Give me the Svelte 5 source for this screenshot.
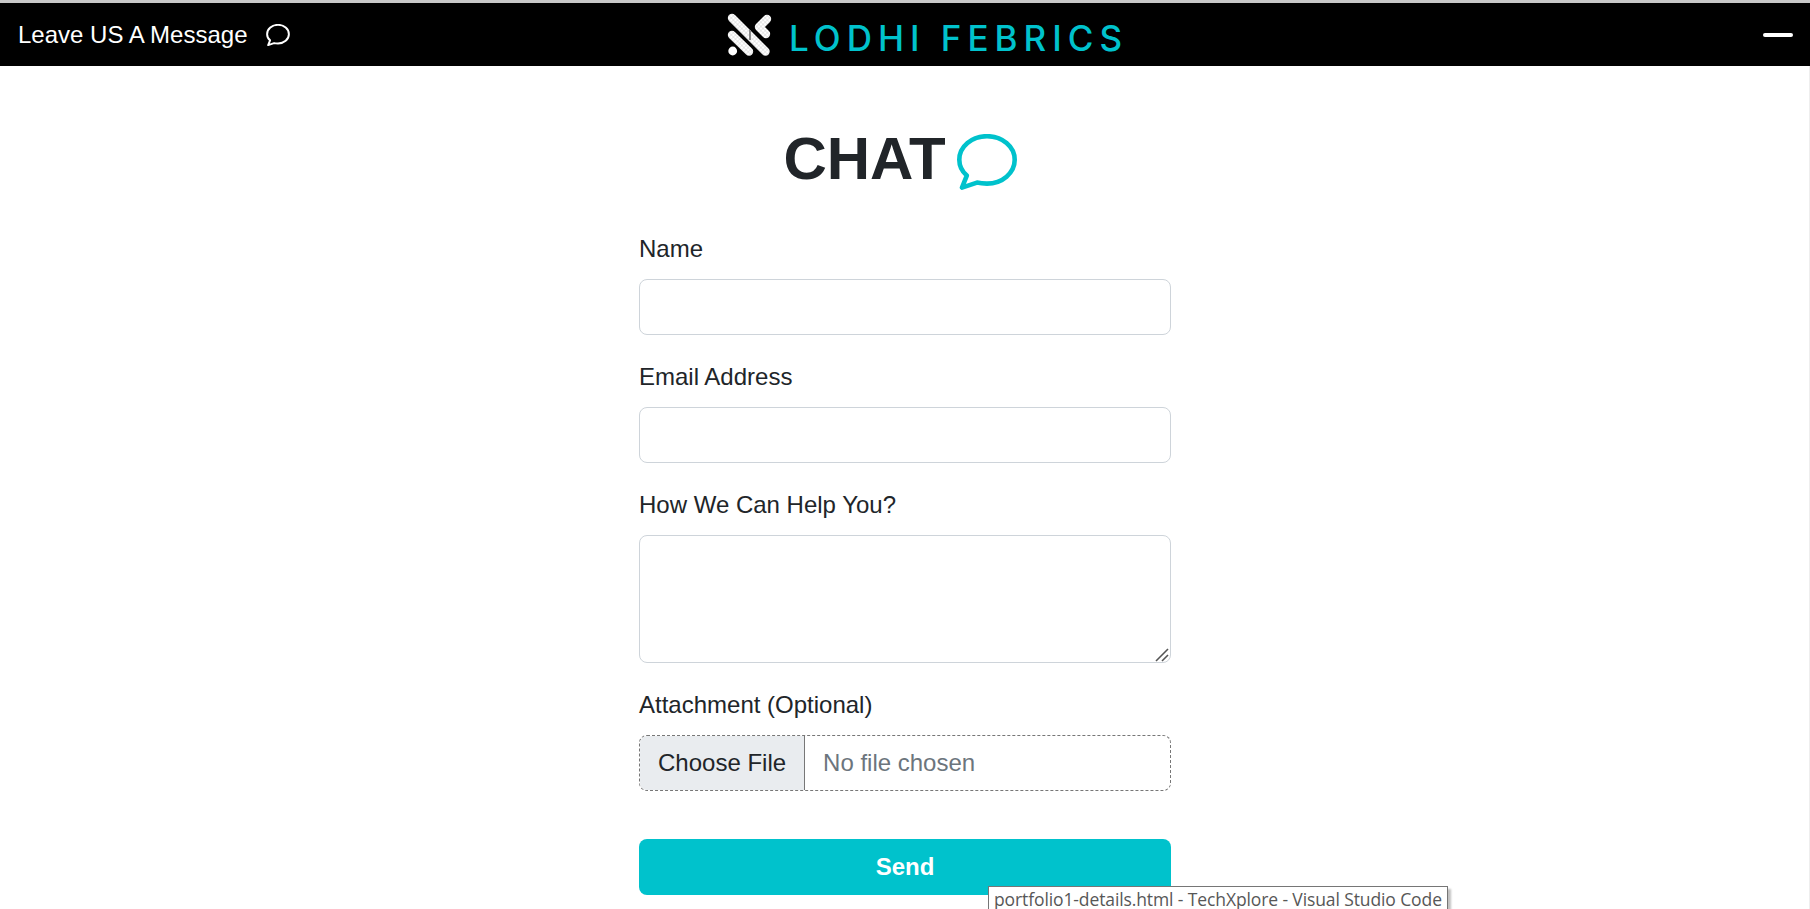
<script>
  let name = ''
  let email = ''
  let message = ''

  // speech bubble used in the top bar and next to the heading
  const bubble = 'M20 48.6C23 49.3 26.4 49.6 30 49.6C45.2 49.6 57.7 39 57.7 25.8C57.7 12.6 45.2 2.2 30 2.2C14.8 2.2 2.3 12.6 2.3 25.8C2.3 32 5.2 37.6 9.8 41.6L5 53.6Z'
</script>

<div class="page">
  <header class="topbar">
    <div class="leave">
      <span>Leave US A Message</span>
      <svg width="24" height="22" viewBox="0 0 60 56" fill="none" stroke="#fff" stroke-width="5" stroke-linejoin="round">
        <path d={bubble} />
      </svg>
    </div>
    <div class="brand">
      <svg width="46" height="44" viewBox="0 0 46 44" fill="none" stroke="url(#weave)" stroke-width="8.4" stroke-linecap="round" stroke-linejoin="round">
        <defs>
          <pattern id="weave" width="3" height="3" patternUnits="userSpaceOnUse" patternTransform="rotate(45)">
            <rect width="3" height="3" fill="#fff" />
            <rect width="3" height="0.4" fill="#ccc" />
            <rect width="0.4" height="3" fill="#ccc" />
          </pattern>
        </defs>
        <path d="M5 5L38.5 38.5" />
        <path d="M5 22L22 38.5" />
        <path d="M40 6L32 14L39 21" />
        <circle cx="5.7" cy="38" r="4.4" fill="#fff" stroke="none" />
        <rect x="22" y="17" width="2" height="10" fill="#888" stroke="none" />
      </svg>
      <span class="brand-name">LODHI FEBRICS</span>
    </div>
    <div class="menu-line"></div>
  </header>

  <main class="content">
    <h1>
      <span>CHAT</span>
      <svg width="60" height="56" viewBox="0 0 60 56" fill="none" stroke="#00c2cc" stroke-width="4.6" stroke-linejoin="round">
        <path d={bubble} />
      </svg>
    </h1>

    <form class="chat-form">
      <label for="name">Name</label>
      <input id="name" class="field" type="text" bind:value={name} />

      <label for="email">Email Address</label>
      <input id="email" class="field" type="email" bind:value={email} />

      <label for="help">How We Can Help You?</label>
      <div class="area-wrap">
        <textarea id="help" class="field area" bind:value={message}></textarea>
        <svg class="grip" width="14" height="14" viewBox="0 0 14 14" stroke="#555" stroke-width="1.6">
          <path d="M1 13L13 1" />
          <path d="M7 13L13 7" />
        </svg>
      </div>

      <label for="file">Attachment (Optional)</label>
      <input id="file" class="field file" type="file" />

      <button class="send" type="submit">Send</button>
    </form>
  </main>

  <div class="tooltip">portfolio1-details.html - TechXplore - Visual Studio Code</div>
</div>

<style>
  :global(body) {
    margin: 0;
    background: #fff;
    overflow: hidden;
  }

  .page {
    position: relative;
    height: 909px;
    overflow: hidden;
    box-shadow: inset -1px 0 #eee;
    font-family: "Liberation Sans", Arial, sans-serif;
    color: #212529;
  }

  .topbar {
    display: flex;
    align-items: center;
    box-sizing: border-box;
    height: 66px;
    background: #000;
    border-top: 3px solid #c8c8c8;
    padding: 0 17px 0 18px;
    color: #fff;
  }

  .leave {
    display: flex;
    align-items: center;
    gap: 19px;
    width: 709px;
    font-size: 24px;
  }

  .brand {
    display: flex;
    align-items: center;
    gap: 16px;
    margin-right: auto;
  }

  .brand-name {
    font-family: Inter, sans-serif;
    font-weight: 500;
    font-size: 35px;
    letter-spacing: 6px;
    color: #00c2cc;
    position: relative;
    top: 3px;
  }

  .menu-line {
    width: 30px;
    height: 4px;
    background: #fff;
    border-radius: 2px;
  }

  .content {
    display: flex;
    flex-direction: column;
    align-items: center;
  }

  h1 {
    display: flex;
    align-items: center;
    gap: 11px;
    margin: 58px 10px 0 0;
    font-size: 60px;
    font-weight: 700;
    line-height: 70px;
  }

  h1 svg {
    margin-top: 6px;
  }

  .chat-form {
    display: flex;
    flex-direction: column;
    width: 532px;
    margin-top: 41px;
  }

  label {
    font-size: 24px;
    line-height: 28px;
    margin-bottom: 16px;
    color: #212529;
  }

  .field {
    box-sizing: border-box;
    width: 100%;
    height: 56px;
    margin-bottom: 28px;
    padding: 0 18px;
    border: 1px solid #ced4da;
    border-radius: 8px;
    background: #fff;
    font-family: inherit;
    font-size: 24px;
    outline: none;
  }

  .area-wrap {
    position: relative;
  }

  .area {
    display: block;
    height: 128px;
    padding: 10px 18px;
    resize: none;
  }

  .grip {
    position: absolute;
    right: 2px;
    bottom: 29px;
    pointer-events: none;
  }

  .file {
    padding: 0;
    border: 1px dashed #777;
    color: #6c757d;
    line-height: 54px;
    margin-bottom: 48px;
  }

  .file::file-selector-button {
    height: 54px;
    margin: 0 18px 0 0;
    padding: 0 18px;
    border: none;
    border-right: 1px solid #777;
    border-radius: 0;
    background: #e9ecef;
    color: #212529;
    font-family: inherit;
    font-size: 24px;
  }

  .send {
    height: 56px;
    border: none;
    border-radius: 8px;
    background: #00c2cc;
    color: #fff;
    font-family: inherit;
    font-size: 24px;
    font-weight: 700;
  }

  .tooltip {
    position: absolute;
    left: 988px;
    top: 886px;
    box-sizing: border-box;
    width: 460px;
    height: 40px;
    padding: 0 5px;
    border: 1px solid #767676;
    background: #fff;
    box-shadow: 3px 3px 2px rgba(0, 0, 0, 0.25);
    font-family: "Open Sans", sans-serif;
    font-size: 17.5px;
    letter-spacing: -0.11px;
    line-height: 24px;
    color: #575757;
    white-space: nowrap;
  }
</style>
